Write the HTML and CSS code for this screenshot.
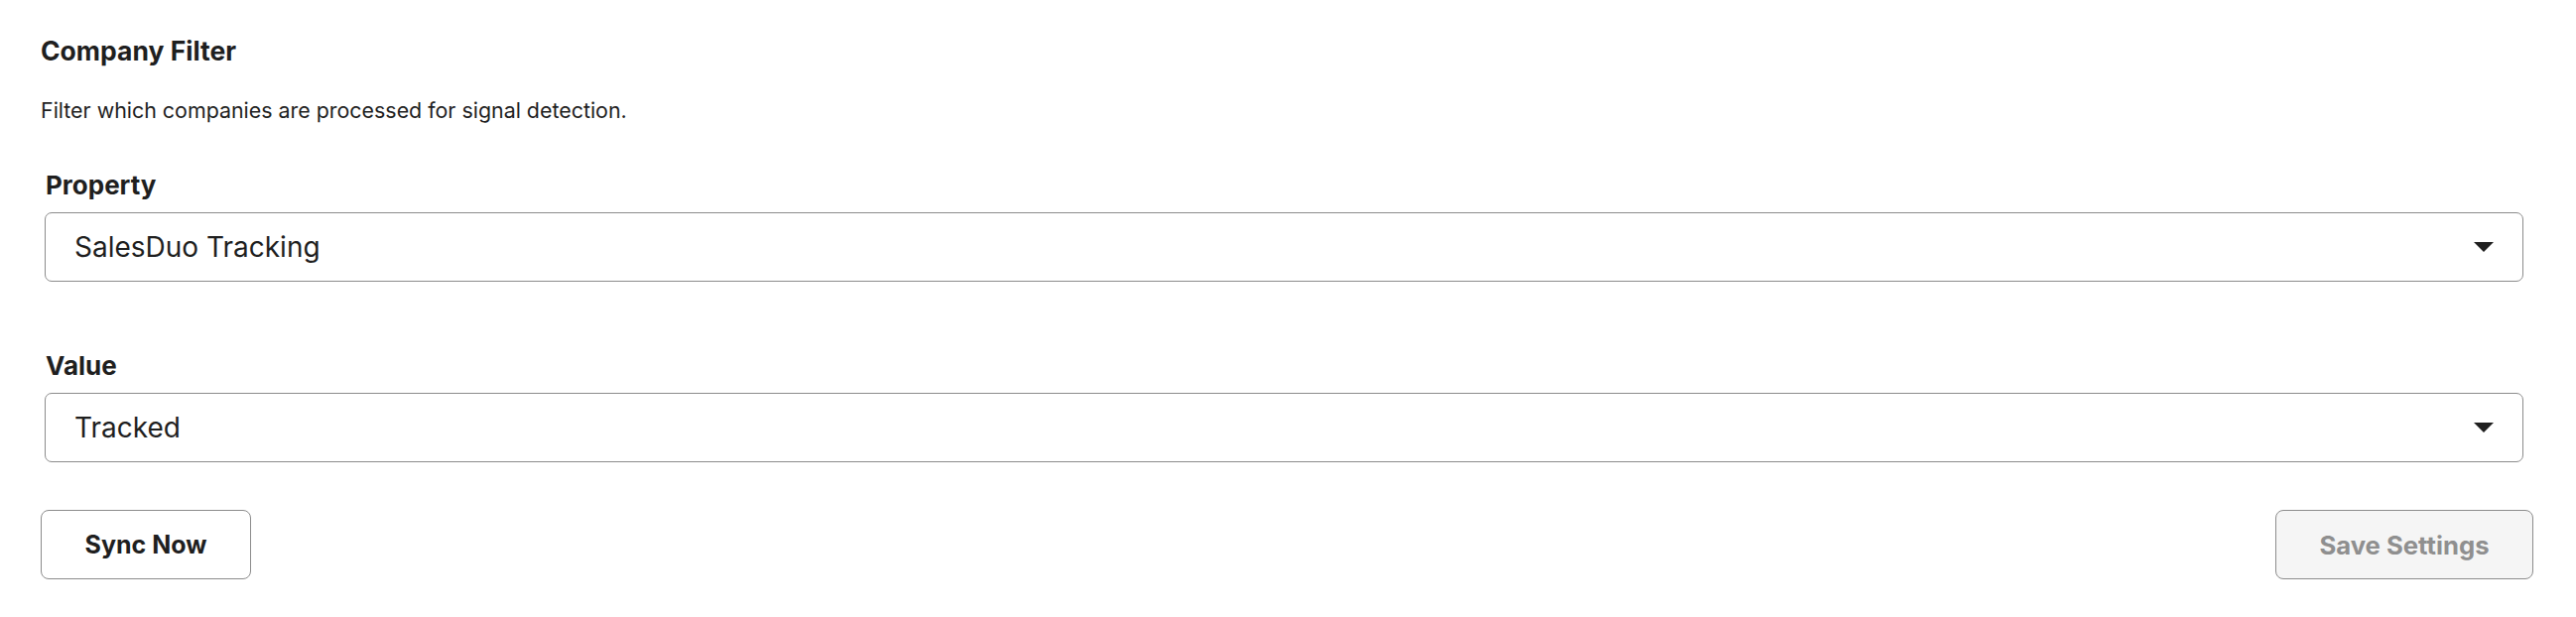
FILE: index.html
```html
<!DOCTYPE html>
<html lang="en">
<head>
<meta charset="utf-8">
<title>Company Filter</title>
<link rel="stylesheet" href="styles.css">
</head>
<body>
<div class="panel">
  <h2 class="title">Company Filter</h2>
  <p class="desc">Filter which companies are processed for signal detection.</p>
  <div class="field field-first">
    <div class="label">Property</div>
    <div class="select">
      <span class="select-value">SalesDuo Tracking</span>
      <svg class="caret" width="20" height="10" viewBox="0 0 20 10"><path d="M0 0 L20 0 L10 10 Z" fill="#1f1f1f"/></svg>
    </div>
  </div>
  <div class="field field-second">
    <div class="label">Value</div>
    <div class="select">
      <span class="select-value">Tracked</span>
      <svg class="caret" width="20" height="10" viewBox="0 0 20 10"><path d="M0 0 L20 0 L10 10 Z" fill="#1f1f1f"/></svg>
    </div>
  </div>
  <div class="actions">
    <button class="btn btn-sync">Sync Now</button>
    <button class="btn btn-save" disabled>Save Settings</button>
  </div>
</div>
</body>
</html>
```
FILE: styles.css
```css
html, body {
  margin: 0;
  padding: 0;
  background: #ffffff;
}
body {
  font-family: Inter, "Noto Sans", sans-serif;
  color: #1f1f1f;
}
.panel {
  padding: 36px 43px 0 41px;
  display: flex;
  flex-direction: column;
}
.title {
  margin: 0;
  font-size: 26.5px;
  line-height: 30px;
  font-weight: 700;
}
.desc {
  margin: 31px 0 0 0;
  font-size: 21.4px;
  line-height: 28px;
  font-weight: 400;
}
.field {
  display: flex;
  flex-direction: column;
  margin-left: 4px;
  margin-right: 10px;
}
.field-first {
  margin-top: 48px;
}
.field-second {
  margin-top: 71px;
}
.label {
  font-size: 26px;
  line-height: 28px;
  font-weight: 700;
  margin-left: 1px;
}
.select {
  margin-top: 13px;
  height: 70px;
  box-sizing: border-box;
  border: 1.5px solid #8c8c8c;
  border-radius: 7px;
  display: flex;
  align-items: center;
  justify-content: space-between;
  padding: 0 29px 0 29px;
  background: #fff;
}
.select-value {
  font-size: 28px;
  line-height: 30px;
}
.caret {
  display: block;
}
.actions {
  margin-top: 48px;
  display: flex;
  justify-content: space-between;
}
.btn {
  height: 70px;
  box-sizing: border-box;
  border: 1.5px solid #8c8c8c;
  border-radius: 8px;
  background: #ffffff;
  font-family: Inter, "Noto Sans", sans-serif;
  font-size: 25px;
  font-weight: 700;
  color: #1f1f1f;
  padding: 0;
}
.btn-sync {
  width: 212px;
}
.btn-save {
  width: 260px;
  background: #f5f5f5;
  color: #8f8f8f;
  font-size: 25.7px;
}
```
